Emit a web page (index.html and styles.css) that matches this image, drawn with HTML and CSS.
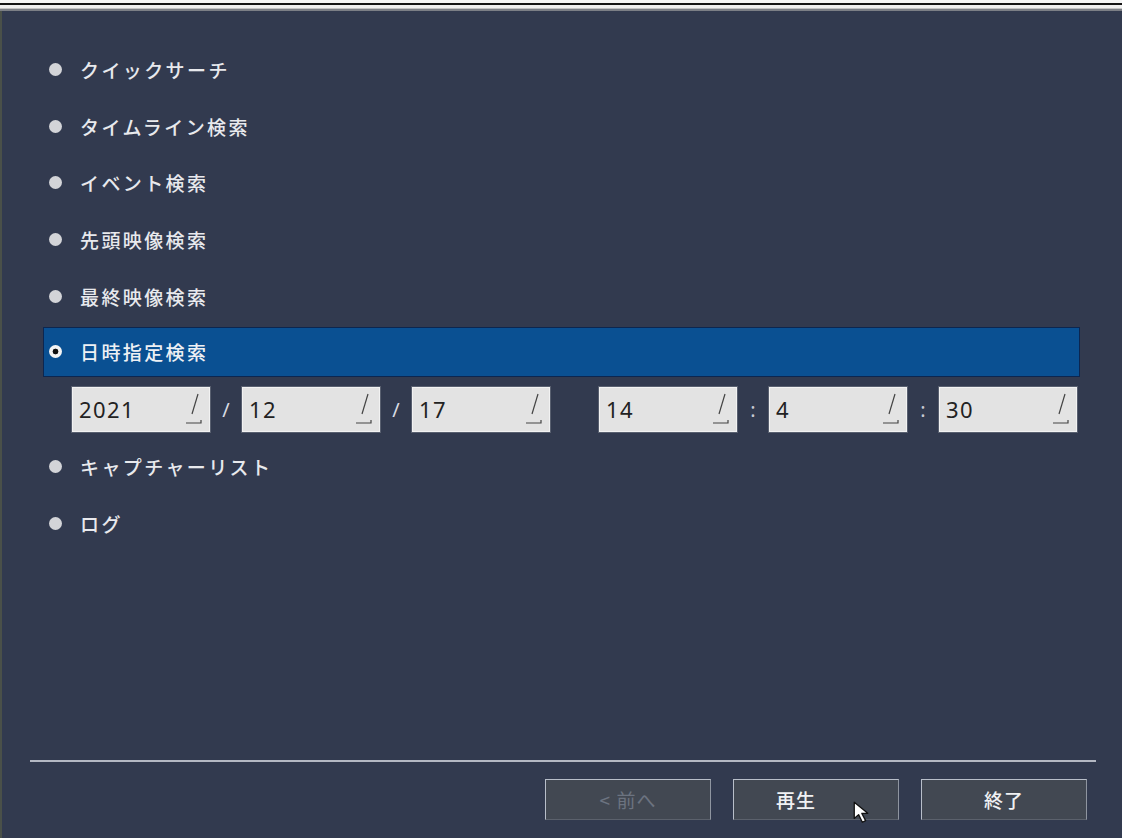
FILE: index.html
```html
<!DOCTYPE html>
<html lang="ja">
<head>
<meta charset="utf-8">
<title>検索</title>
<link rel="stylesheet" href="styles.css">
</head>
<body>
<div class="topbar"></div>
<div class="panel">
  <ul class="menu">
    <li class="item"><span class="dot"></span><span class="label">クイックサーチ</span></li>
    <li class="item"><span class="dot"></span><span class="label">タイムライン検索</span></li>
    <li class="item"><span class="dot"></span><span class="label">イベント検索</span></li>
    <li class="item"><span class="dot"></span><span class="label">先頭映像検索</span></li>
    <li class="item"><span class="dot"></span><span class="label">最終映像検索</span></li>
    <li class="item selected"><div class="bar"><span class="dot radio"></span><span class="label">日時指定検索</span></div></li>
    <li class="item daterow">
      <div class="field"><span class="val">2021</span><svg class="spin" viewBox="0 0 18 34"><line x1="13" y1="1" x2="7" y2="21" /><polyline points="1,30 16,30 16,27" /></svg></div>
      <span class="sep">/</span>
      <div class="field"><span class="val">12</span><svg class="spin" viewBox="0 0 18 34"><line x1="13" y1="1" x2="7" y2="21" /><polyline points="1,30 16,30 16,27" /></svg></div>
      <span class="sep">/</span>
      <div class="field"><span class="val">17</span><svg class="spin" viewBox="0 0 18 34"><line x1="13" y1="1" x2="7" y2="21" /><polyline points="1,30 16,30 16,27" /></svg></div>
      <span class="gap"></span>
      <div class="field"><span class="val">14</span><svg class="spin" viewBox="0 0 18 34"><line x1="13" y1="1" x2="7" y2="21" /><polyline points="1,30 16,30 16,27" /></svg></div>
      <span class="sep colon">:</span>
      <div class="field"><span class="val">4</span><svg class="spin" viewBox="0 0 18 34"><line x1="13" y1="1" x2="7" y2="21" /><polyline points="1,30 16,30 16,27" /></svg></div>
      <span class="sep colon">:</span>
      <div class="field"><span class="val">30</span><svg class="spin" viewBox="0 0 18 34"><line x1="13" y1="1" x2="7" y2="21" /><polyline points="1,30 16,30 16,27" /></svg></div>
    </li>
    <li class="item"><span class="dot"></span><span class="label">キャプチャーリスト</span></li>
    <li class="item"><span class="dot"></span><span class="label">ログ</span></li>
  </ul>
  <div class="footer">
    <div class="divider"></div>
    <div class="buttons">
      <button class="btn disabled">&lt; 前へ</button>
      <button class="btn play">再生</button>
      <button class="btn">終了</button>
    </div>
  </div>
  <svg class="cursor" viewBox="0 0 24 24" width="26" height="26"><path d="M3 2 L3 17 L7 13.5 L10.5 20.5 L13.5 19 L10 12.3 L15.5 12.3 Z" fill="#ffffff" stroke="#111111" stroke-width="1.2" stroke-linejoin="round"/></svg>
</div>
</body>
</html>
```

FILE: styles.css
```css
html, body {
  margin: 0;
  padding: 0;
}
body {
  width: 1122px;
  height: 838px;
  overflow: hidden;
  background: #323a4f;
  font-family: "Noto Sans CJK JP", "Noto Sans", sans-serif;
}
.topbar {
  height: 11px;
  background: linear-gradient(to bottom,
    #f6f6f6 0, #f6f6f6 3px,
    #151515 3px, #151515 5px,
    #f0f0f0 5px, #f0f0f0 8px,
    #c4c4c4 8px, #c4c4c4 9px,
    #7c7f86 9px, #7c7f86 11px);
}
.panel {
  position: relative;
  height: 827px;
  box-sizing: border-box;
  border-left: 2px solid #4a5049;
  padding-bottom: 18px;
  display: flex;
  flex-direction: column;
}
.menu {
  list-style: none;
  margin: 0;
  padding: 30px 0 0 0;
  display: grid;
  grid-auto-rows: 56.75px;
}
.item {
  display: flex;
  align-items: center;
  padding-left: 47px;
}
.dot {
  width: 13px;
  height: 13px;
  border-radius: 50%;
  background: #d3d4d8;
  flex: none;
}
.label {
  margin-left: 18px;
  color: #e8e9ed;
  font-size: 19px;
  font-weight: 500;
  letter-spacing: 2.4px;
  line-height: 1;
}
.selected {
  padding-left: 41px;
}
.bar {
  width: 1037px;
  height: 50px;
  box-sizing: border-box;
  background: #0a5092;
  border: 1px solid #0c2650;
  display: flex;
  align-items: center;
  padding-left: 5px;
  margin-top: -3px;
}
.radio {
  width: 13px;
  height: 13px;
  background: radial-gradient(circle, #111 0, #111 2.6px, #f4f4f4 3.2px);
}
.bar .label {
  margin-left: 18px;
  color: #eef0f4;
}
.daterow {
  padding-left: 70px;
}
.field {
  width: 138px;
  height: 45px;
  box-sizing: border-box;
  background: #e3e3e3;
  border: 1px solid #f2f2f2;
  box-shadow: 0 0 0 1px #596070;
  display: flex;
  align-items: flex-start;
  justify-content: space-between;
  padding: 0 6px 0 6px;
}
.val {
  font-family: "Noto Sans", sans-serif;
  font-size: 22px;
  letter-spacing: 1.4px;
  line-height: 43px;
  color: #222;
}
.spin {
  width: 18px;
  height: 34px;
  margin-top: 5px;
  fill: none;
  stroke: #444;
  stroke-width: 1.2;
}
.sep {
  width: 32px;
  text-align: center;
  color: #d8dbe2;
  font-family: "Noto Sans", sans-serif;
  font-size: 20px;
}
.colon {
  font-size: 20px;
  color: #c6cad3;
}
.gap {
  width: 49px;
}
.footer {
  margin-top: auto;
}
.divider {
  height: 2px;
  margin: 0 26px 0 28px;
  background: #b4b8c3;
}
.buttons {
  margin-top: 17px;
  display: flex;
  justify-content: flex-end;
  gap: 22px;
  padding-right: 35px;
}
.btn {
  width: 166px;
  height: 41px;
  box-sizing: border-box;
  background: #424852;
  border: 1px solid;
  border-color: #b8bec9 #8f95a0 #5b616c #b8bec9;
  color: #f0f1f3;
  font-family: "Noto Sans CJK JP", sans-serif;
  font-size: 19px;
  font-weight: 500;
  letter-spacing: 1px;
  padding: 0;
}
.btn.play {
  padding-right: 40px;
}
.btn.disabled {
  color: #6c7380;
  font-weight: 400;
}
.cursor {
  position: absolute;
  left: 849px;
  top: 789px;
}
```
